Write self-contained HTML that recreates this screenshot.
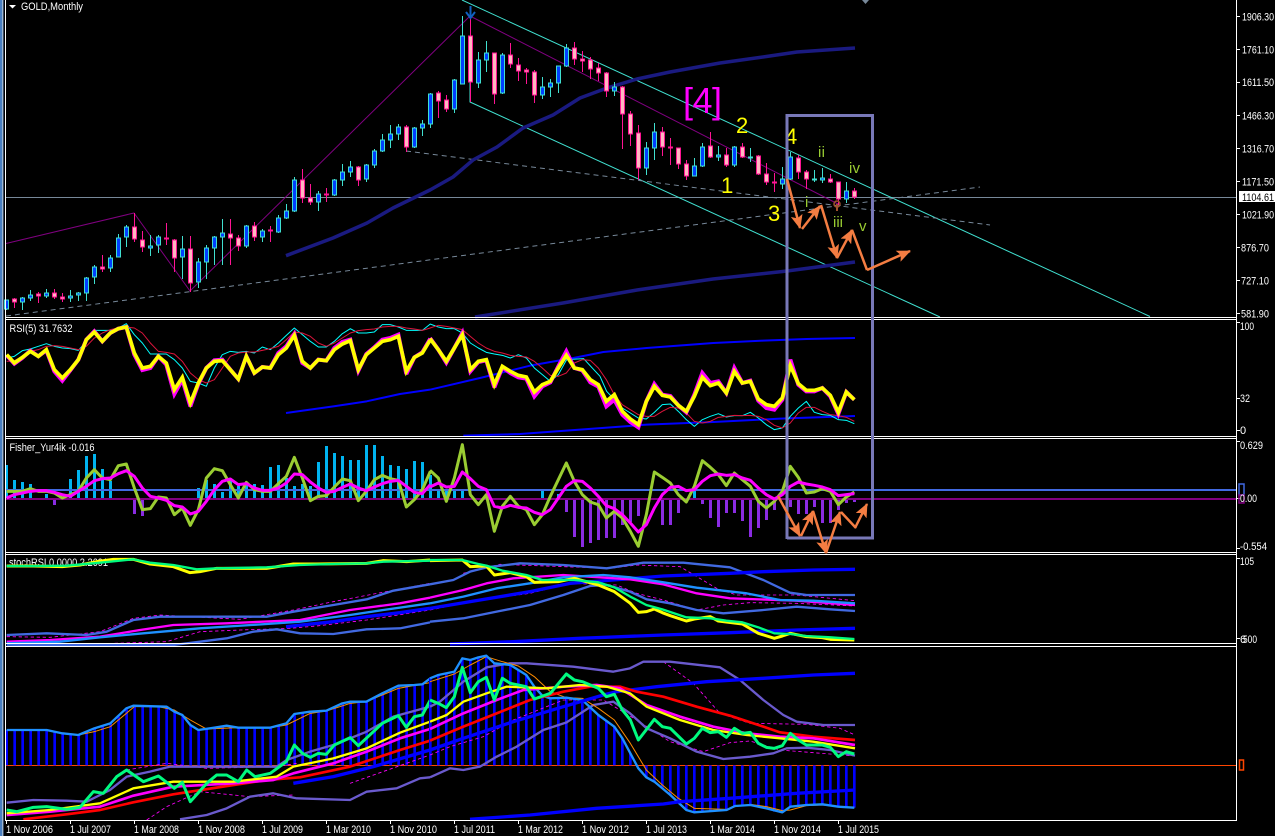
<!DOCTYPE html>
<html><head><meta charset="utf-8"><title>GOLD,Monthly</title>
<style>
html,body{margin:0;padding:0;background:#000;width:1275px;height:836px;overflow:hidden}
svg{display:block}
text{font-family:"Liberation Sans",sans-serif;font-size:11px;fill:#fff}
.l{fill:none;stroke-linejoin:round}
</style></head><body>
<svg width="1275" height="836" viewBox="0 0 1275 836" xmlns="http://www.w3.org/2000/svg">
<defs>
<marker id="a" markerUnits="userSpaceOnUse" markerWidth="14" markerHeight="12" refX="13" refY="6" orient="auto"><path d="M0 0L14 6L0 12L3 6z" fill="#f47d42"/></marker>
</defs>
<rect width="1275" height="836" fill="#000"/>
<rect x="0" y="0" width="2" height="836" fill="#4a7fc0"/>
<rect x="2" y="0" width="1" height="836" fill="#9ab4d0"/>
<rect x="3" y="0" width="1" height="836" fill="#3a4a60"/>

<!-- MAIN CHART -->
<path d="M5 197.5H1236" stroke="#778899" stroke-width="1" shape-rendering="crispEdges"/>
<path class="l" d="M6 243.5L134 213L190 291L470 16L838 204" stroke="#800080" stroke-width="1"/>
<path class="l" d="M462 0L1150 316.5M470 82V102L940 317" stroke="#40e0d0" stroke-width="1"/>
<path class="l" d="M6 316L980 187M406 151L990 225" stroke="#778899" stroke-width="1" stroke-dasharray="5 4"/>
<path class="l" d="M286 255.7L333 238L367 223L393 208L430 190L453 177L473 160L497 147L523 128L553 115L580 98L607 88L637 79L670 72L720 63L763 57L797 52L855 48" stroke="#1a1a80" stroke-width="3.500"/>
<path class="l" d="M475 317L563 303L637 290L713 279L787 271L855 262" stroke="#1a1a80" stroke-width="3.500"/>

<g shape-rendering="crispEdges">
<path fill="none" stroke="#40e0d0" d="M6.5 300V310M22.5 297V310M30.5 290V301M46.5 289V298M70.5 290V302M78.5 292V301M86.5 277V301M94.5 265V284M110.5 255V272M118.5 234V257M126.5 225V247M150.5 235V256M158.5 235V253M182.5 236V279M198.5 258V288M206.5 245V279M214.5 236V265M222.5 219V265M246.5 225V248M262.5 229V242M278.5 215V233M286.5 204V219M294.5 177V212M318.5 191V211M334.5 179V196M342.5 164V186M350.5 161V177M366.5 164V182M374.5 149V168M382.5 134V152M390.5 125V148M398.5 124V140M414.5 127V148M422.5 120V136M430.5 93V128M454.5 79V113M462.5 16V84M478.5 52V88M486.5 41V72M502.5 53V94M542.5 77V99M550.5 79V97M558.5 66V93M566.5 44V67M614.5 82V96M646.5 142V175M654.5 123V160M694.5 158V176M702.5 143V167M718.5 146V161M734.5 146V167M750.5 148V162M782.5 167V189M790.5 152V180M814.5 170V182M822.5 168V183M846.5 182V203"/>
<path fill="#0040ff" stroke="#40e0d0" d="M4.5 300h4V309h-4zM20.5 298h4V302h-4zM28.5 295h4V298h-4zM44.5 293h4V296h-4zM68.5 296h4V298h-4zM76.5 293h4V295h-4zM84.5 278h4V293h-4zM92.5 267h4V277h-4zM108.5 258h4V268h-4zM116.5 238h4V257h-4zM124.5 227h4V237h-4zM148.5 246h4V248h-4zM156.5 237h4V245h-4zM180.5 249h4V257h-4zM196.5 262h4V282h-4zM204.5 248h4V262h-4zM212.5 237h4V248h-4zM220.5 233h4V237h-4zM244.5 226h4V246h-4zM260.5 231h4V237h-4zM276.5 218h4V232h-4zM284.5 211h4V218h-4zM292.5 180h4V211h-4zM316.5 194h4V202h-4zM332.5 180h4V195h-4zM340.5 172h4V180h-4zM348.5 167h4V172h-4zM364.5 165h4V179h-4zM372.5 151h4V165h-4zM380.5 140h4V151h-4zM388.5 134h4V140h-4zM396.5 127h4V134h-4zM412.5 128h4V147h-4zM420.5 124h4V128h-4zM428.5 94h4V124h-4zM452.5 80h4V109h-4zM460.5 36h4V84h-4zM476.5 60h4V83h-4zM484.5 53h4V60h-4zM500.5 55h4V93h-4zM540.5 87h4V95h-4zM548.5 83h4V87h-4zM556.5 66h4V83h-4zM564.5 48h4V66h-4zM612.5 87h4V91h-4zM644.5 148h4V168h-4zM652.5 132h4V148h-4zM692.5 166h4V176h-4zM700.5 147h4V166h-4zM716.5 155h4V157h-4zM732.5 147h4V165h-4zM748.5 157h4V158h-4zM780.5 179h4V184h-4zM788.5 157h4V179h-4zM812.5 179h4V180h-4zM820.5 178h4V180h-4zM844.5 191h4V199h-4z"/>
<path fill="none" stroke="#ff1493" d="M14.5 298V308M38.5 292V303M54.5 289V299M62.5 293V302M102.5 255V272M134.5 213V242M142.5 231V252M166.5 223V245M174.5 239V272M190.5 236V292M230.5 219V265M238.5 235V251M254.5 222V241M270.5 226V242M302.5 169V203M310.5 184V205M326.5 188V202M358.5 166V186M406.5 125V152M438.5 91V118M446.5 95V112M470.5 10V102M494.5 53V104M510.5 43V68M518.5 58V81M526.5 68V84M534.5 70V103M574.5 42V65M582.5 51V72M590.5 57V79M598.5 63V81M606.5 72V97M622.5 86V149M630.5 111V146M638.5 125V180M662.5 127V156M670.5 138V165M678.5 148V169M686.5 160V180M710.5 132V158M726.5 148V167M742.5 143V158M758.5 155V175M766.5 163V185M774.5 173V192M798.5 155V179M806.5 170V189M830.5 174V183M838.5 182V205M854.5 188V199"/>
<path fill="#ffb6c1" stroke="#ff1493" d="M12.5 299h4V302h-4zM36.5 294h4V296h-4zM52.5 293h4V297h-4zM60.5 297h4V299h-4zM100.5 267h4V269h-4zM132.5 227h4V239h-4zM140.5 240h4V247h-4zM164.5 238h4V239h-4zM172.5 240h4V258h-4zM188.5 249h4V283h-4zM228.5 234h4V238h-4zM236.5 238h4V246h-4zM252.5 226h4V237h-4zM268.5 230h4V231h-4zM300.5 180h4V198h-4zM308.5 198h4V202h-4zM324.5 194h4V195h-4zM356.5 167h4V180h-4zM404.5 127h4V147h-4zM436.5 93h4V101h-4zM444.5 100h4V109h-4zM468.5 36h4V82h-4zM492.5 53h4V94h-4zM508.5 55h4V64h-4zM516.5 65h4V71h-4zM524.5 70h4V72h-4zM532.5 72h4V95h-4zM572.5 48h4V59h-4zM580.5 59h4V61h-4zM588.5 60h4V69h-4zM596.5 68h4V73h-4zM604.5 73h4V91h-4zM620.5 87h4V114h-4zM628.5 114h4V134h-4zM636.5 133h4V168h-4zM660.5 132h4V147h-4zM668.5 147h4V148h-4zM676.5 148h4V164h-4zM684.5 164h4V176h-4zM708.5 146h4V157h-4zM724.5 155h4V165h-4zM740.5 147h4V157h-4zM756.5 156h4V174h-4zM764.5 174h4V182h-4zM772.5 182h4V183h-4zM796.5 158h4V172h-4zM804.5 172h4V179h-4zM828.5 179h4V182h-4zM836.5 182h4V199h-4zM852.5 191h4V197h-4z"/>
</g>

<path d="M470.5 6V18M466 12L470.5 18L475 12" fill="none" stroke="#1060c0" stroke-width="2"/>
<path d="M862 0H869L865.5 4z" fill="#778899"/>
<circle cx="837" cy="204" r="3" fill="none" stroke="#a0522d" stroke-width="1.5"/><path d="M837 204V211" stroke="#a0522d" stroke-width="2"/>

<text x="683" y="113" style="font-size:36px;fill:#ff00ff" textLength="39">[4]</text>
<text x="736" y="133" style="font-size:22px;fill:#ff0">2</text>
<text x="785" y="144" style="font-size:22px;fill:#ff0">4</text>
<text x="721" y="193" style="font-size:22px;fill:#ff0">1</text>
<text x="768" y="221" style="font-size:22px;fill:#ff0">3</text>
<text x="818" y="157" style="font-size:15px;fill:#9acd32" textLength="7">ii</text>
<text x="849" y="173" style="font-size:15px;fill:#9acd32" textLength="11">iv</text>
<text x="805" y="207" style="font-size:15px;fill:#9acd32">i</text>
<text x="833" y="227" style="font-size:15px;fill:#9acd32" textLength="10">iii</text>
<text x="859" y="231" style="font-size:15px;fill:#9acd32">v</text>

<path d="M9 5H16L12.5 8.5z" fill="#fff"/>
<text x="21" y="10" textLength="62" lengthAdjust="spacingAndGlyphs">GOLD,Monthly</text>

<!-- RSI -->
<g transform="translate(0 318) scale(.33333)" class="l">
<polyline class="l" stroke="#0000ff" stroke-width="6" points="858,285 1000,265 1100,250 1200,228 1290,215"/>
<polyline class="l" stroke="#00ffff" stroke-width="3" points="20,120 43,115 67,98 91,93 115,85 139,77 163,85 187,90 211,92 235,97 259,70 283,37 307,37 331,37 355,30 379,17 403,50 427,75 451,108 475,108 499,108 523,125 547,150 571,190 595,195 619,205 643,150 667,110 691,100 715,103 739,100 763,105 787,87 811,95 835,75 859,52 883,30 907,50 931,70 955,87 979,87 1003,70 1027,47 1051,32 1075,45 1099,45 1123,42 1147,20 1171,20 1195,27 1219,37 1243,37 1267,37 1291,18"/>
<polyline class="l" stroke="#dc143c" stroke-width="3" points="20,130 43,128 67,115 91,100 115,95 139,85 163,83 187,85 211,90 235,95 259,85 283,60 307,45 331,35 355,30 379,27 403,30 427,45 451,75 475,100 499,103 523,108 547,130 571,165 595,185 619,195 643,185 667,150 691,115 715,105 739,102 763,102 787,97 811,92 835,85 859,65 883,42 907,45 931,55 955,75 979,85 1003,75 1027,60 1051,45 1075,38 1099,35 1123,33 1147,27 1171,25 1195,25 1219,30 1243,33 1267,37 1291,30"/>
<polyline class="l" stroke="#ff00ff" stroke-width="12" style="stroke-linejoin:miter;stroke-miterlimit:3" points="20,112 43,137 67,120 91,98 115,115 139,97 163,160 187,188 211,157 235,125 259,65 283,40 307,70 331,45 355,32 379,27 403,110 427,156 451,150 475,115 499,140 523,228 547,185 571,265 595,198 619,150 643,127 667,125 691,155 715,183 739,115 763,165 787,147 811,150 835,105 859,85 883,48 907,135 931,150 955,125 979,128 1003,90 1027,72 1051,65 1075,158 1099,108 1123,88 1147,65 1171,60 1195,50 1219,168 1243,118 1267,103 1291,62"/>
<polyline class="l" stroke="#ffff00" stroke-width="11" style="stroke-linejoin:miter" points="20,110 43,135 67,118 91,100 115,115 139,95 163,155 187,180 211,155 235,125 259,65 283,42 307,70 331,45 355,32 379,27 403,105 427,150 451,145 475,115 499,135 523,215 547,178 571,255 595,195 619,150 643,130 667,128 691,155 715,183 739,115 763,165 787,147 811,150 835,110 859,90 883,52 907,130 931,150 955,125 979,128 1003,95 1027,78 1051,68 1075,155 1099,110 1123,90 1147,70 1171,65 1195,55 1219,160 1243,118 1267,105 1291,65"/>
</g>
<g transform="translate(430 318) scale(.33333)" class="l">
<polyline class="l" stroke="#0000ff" stroke-width="6" points="0,215 150,180 300,143 430,120 520,102 650,90 850,75 1000,68 1130,63 1275,60"/>
<polyline class="l" stroke="#0000ff" stroke-width="6" points="100,353 270,348 450,335 650,320 850,312 1050,302 1275,294"/>
<polyline class="l" stroke="#00ffff" stroke-width="3" points="0,18 25,27 49,32 73,32 97,45 121,75 145,90 169,103 193,108 217,112 241,120 265,110 289,120 313,150 337,170 361,190 385,170 410,125 461,122 510,175 530,220 577,270 625,300 649,303 673,283 697,260 721,258 745,280 769,305 793,325 817,305 841,295 865,287 889,297 913,293 937,293 961,283 985,300 1009,320 1033,335 1057,330 1081,295 1105,270 1129,250 1153,283 1177,290 1201,292 1225,305 1249,307 1273,317"/>
<polyline class="l" stroke="#dc143c" stroke-width="3" points="0,30 25,22 49,25 73,30 97,35 121,55 145,75 169,90 193,100 217,105 241,112 265,115 289,117 313,130 337,150 361,172 385,175 409,165 433,135 457,125 481,127 505,150 529,185 553,230 577,260 601,275 625,290 649,295 673,295 697,280 721,268 745,270 769,285 793,310 817,315 841,310 865,298 889,295 913,292 937,293 961,292 985,295 1009,305 1033,322 1057,330 1081,315 1105,285 1129,268 1153,268 1177,280 1201,290 1225,293 1249,298 1273,310"/>
<polyline class="l" stroke="#ff00ff" stroke-width="12" style="stroke-linejoin:miter;stroke-miterlimit:3" points="0,60 25,95 49,134 73,90 97,45 121,160 145,132 169,127 193,208 217,148 241,165 265,178 289,182 313,235 337,205 361,193 385,145 409,100 433,150 457,157 481,193 505,206 529,265 553,245 577,290 601,312 625,328 649,250 673,198 697,230 721,234 745,262 769,283 793,230 817,165 841,195 865,190 889,225 913,150 937,195 961,188 985,248 1009,270 1033,275 1057,245 1081,125 1105,200 1129,220 1153,220 1177,210 1201,235 1225,288 1249,222 1273,245"/>
<polyline class="l" stroke="#ffff00" stroke-width="11" style="stroke-linejoin:miter" points="0,62 25,95 49,130 73,90 97,50 121,155 145,130 169,125 193,200 217,145 241,160 265,172 289,177 313,222 337,200 361,190 385,150 409,112 433,150 457,155 481,185 505,200 529,250 553,230 577,280 601,303 625,320 649,250 673,205 697,232 721,237 745,262 769,280 793,235 817,178 841,203 865,195 889,225 913,160 937,195 961,190 985,243 1009,260 1033,265 1057,240 1081,142 1105,197 1129,217 1153,217 1177,210 1201,232 1225,283 1249,222 1273,245"/>
</g>
<text x="9.5" y="332" textLength="63" lengthAdjust="spacingAndGlyphs">RSI(5) 31.7632</text>

<!-- FISHER -->
<g shape-rendering="crispEdges" fill="none" stroke-width="3">
<path stroke="#00b4f0" d="M6.5 465V499M14.5 480V499M22.5 482V499M30.5 484V499M46.5 494V499M70.5 479V499M78.5 470V499M86.5 456V499M94.5 454V499M102.5 469V499M110.5 481V499M198.5 488V499M206.5 480V499M214.5 484V499M222.5 492V499M230.5 480V499M238.5 486V499M246.5 484V499M254.5 484V499M262.5 485V499M270.5 467V499M278.5 465V499M286.5 478V499M294.5 486V499M302.5 484V499M310.5 486V499M318.5 462V499M326.5 446V499M334.5 453V499M342.5 456V499M350.5 460V499M358.5 460V499M366.5 445V499M374.5 445V499M382.5 456V499M390.5 465V499M398.5 466V499M406.5 469V499M414.5 461V499M422.5 462V499M430.5 475V499M438.5 491V499M446.5 491V499M454.5 491V499M462.5 491V499M542.5 491V499M558.5 494V499M694.5 491V499"/>
<path stroke="#8a2be2" d="M54.5 499V505M134.5 499V514M142.5 499V516M566.5 499V512M574.5 499V537M582.5 499V547M590.5 499V543M598.5 499V540M606.5 499V538M614.5 499V538M622.5 499V525M630.5 499V522M638.5 499V516M662.5 499V525M670.5 499V525M678.5 499V513M702.5 499V504M710.5 499V518M718.5 499V527M726.5 499V513M734.5 499V513M742.5 499V521M750.5 499V537M758.5 499V528M766.5 499V520M774.5 499V510M790.5 499V507M798.5 499V514M806.5 499V514M814.5 499V507M822.5 499V523M830.5 499V523M838.5 499V510M846.5 499V503M854.5 499V502"/>
</g>
<path d="M6 490H1236" stroke="#4169e1" stroke-width="2" shape-rendering="crispEdges"/>
<path d="M6 499H1236" stroke="#800080" stroke-width="2" shape-rendering="crispEdges"/>
<g transform="translate(0 318) scale(.33333)">
<polyline class="l" stroke="#9acd32" stroke-width="9" points="20,520 43,520 67,520 91,512 115,520 139,520 163,525 187,540 211,530 235,520 259,480 283,455 307,480 331,485 355,443 379,438 403,510 427,575 451,572 475,537 499,540 523,590 547,570 571,622 595,575 619,480 643,452 667,458 691,500 715,540 739,493 763,515 787,520 811,520 835,497 859,475 883,418 907,480 931,548 955,535 979,533 1003,507 1027,483 1051,488 1075,548 1099,520 1123,485 1147,472 1171,482 1195,487 1219,567 1243,545 1267,515 1291,460"/>
<polyline class="l" stroke="#ff00ff" stroke-width="9" points="20,540 43,530 67,525 91,520 115,518 139,518 163,523 187,530 211,535 235,520 259,505 283,488 307,482 331,480 355,467 379,458 403,475 427,510 451,535 475,540 499,547 523,563 547,567 571,588 595,580 619,550 643,515 667,490 691,483 715,500 739,497 763,510 787,517 811,517 835,510 859,495 883,468 907,470 931,492 955,510 979,523 1003,520 1027,508 1051,498 1075,510 1099,518 1123,507 1147,497 1171,490 1195,487 1219,505 1243,523 1267,527 1291,500"/>
</g>
<g transform="translate(430 318) scale(.33333)">
<polyline class="l" stroke="#9acd32" stroke-width="9" points="0,457 25,480 49,550 73,480 97,380 121,530 145,560 169,530 193,640 217,565 241,535 265,565 289,575 313,620 337,590 361,535 385,485 409,435 433,490 457,530 481,552 505,560 529,600 553,580 577,600 601,640 625,685 649,590 673,462 697,478 721,495 745,530 769,552 793,505 817,428 841,448 865,470 889,503 913,465 937,485 961,505 985,550 1009,570 1033,550 1057,520 1081,445 1105,478 1129,525 1153,522 1177,512 1201,520 1225,560 1249,537 1273,522"/>
<polyline class="l" stroke="#ff00ff" stroke-width="9" points="0,507 25,495 49,507 73,505 97,462 121,482 145,505 169,515 193,565 217,570 241,562 265,568 289,570 313,583 337,590 361,575 385,540 409,505 433,488 457,490 481,510 505,535 529,563 553,572 577,590 601,615 625,642 649,620 673,570 697,530 721,508 745,505 769,518 793,515 817,490 841,473 865,468 889,472 913,470 937,480 961,487 985,510 1009,530 1033,543 1057,530 1081,505 1105,492 1129,498 1153,502 1177,507 1201,515 1225,533 1249,530 1273,527"/>
</g>
<text x="9.5" y="451" textLength="85" lengthAdjust="spacingAndGlyphs">Fisher_Yur4ik -0.016</text>

<!-- STOCH RSI -->
<text x="9" y="566" textLength="99" lengthAdjust="spacingAndGlyphs">stochRSI 0.0000 2.2691</text>
<g transform="translate(0 550) scale(.33333)">
<polyline class="l" stroke="#ff00ff" stroke-width="2.5" stroke-dasharray="10 8" points="20,260 150,262 300,245 400,205 480,195 720,208 880,180 1000,155 1290,100"/>
<polyline class="l" stroke="#ff00ff" stroke-width="2.5" stroke-dasharray="10 8" points="20,290 500,275 600,245 720,240 870,235 950,228 1100,210 1290,180"/>
<polyline class="l" stroke="#4169e1" stroke-width="7" points="20,255 140,250 260,255 320,245 400,210 480,200 800,200 880,185 1000,165 1100,148 1180,122 1290,103"/>
<polyline class="l" stroke="#4169e1" stroke-width="7" points="20,284 100,285 520,285 600,275 680,265 760,245 830,238 900,250 1000,252 1100,238 1200,235 1290,217"/>
<polyline class="l" stroke="#0000ff" stroke-width="10" points="858,230 1000,215 1100,200 1200,188 1290,175"/>
<polyline class="l" stroke="#ff00ff" stroke-width="7" points="20,275 150,270 300,260 420,240 520,225 680,220 900,210 1050,180 1200,160 1290,143"/>
<polyline class="l" stroke="#1e90ff" stroke-width="7" points="20,280 180,275 300,262 430,250 600,235 800,222 900,215 1050,195 1150,180 1290,160"/>
<polyline class="l" stroke="#ffff00" stroke-width="9" points="20,48 100,48 187,50 240,45 290,35 340,28 400,28 450,42 520,50 570,68 600,65 650,55 700,55 800,55 880,42 950,42 1100,40 1150,32 1220,35 1290,30"/>
<polyline class="l" stroke="#00fa7f" stroke-width="7" points="20,48 100,48 200,47 300,38 400,28 450,38 520,45 590,58 650,55 800,52 900,45 1000,42 1100,40 1150,35 1290,32"/>
</g>
<g transform="translate(430 550) scale(.33333)">
<polyline class="l" stroke="#ff00ff" stroke-width="2.5" stroke-dasharray="10 8" points="100,70 210,43 400,50 540,55 620,45 750,50 860,115 920,135 1100,135 1275,152"/>
<polyline class="l" stroke="#ff00ff" stroke-width="2.5" stroke-dasharray="10 8" points="0,180 150,150 300,130 420,100 560,105 620,130 700,150 800,180 880,165 960,158 1100,160 1275,168"/>
<polyline class="l" stroke="#4169e1" stroke-width="7" points="0,103 70,90 120,65 170,52 270,40 400,45 530,55 640,38 760,38 900,52 1000,90 1080,128 1130,135 1275,135"/>
<polyline class="l" stroke="#4169e1" stroke-width="7" points="0,215 100,205 200,185 300,165 400,135 480,108 530,105 600,125 650,148 720,160 800,180 880,190 1000,180 1100,170 1200,178 1275,183"/>
<polyline class="l" stroke="#0000ff" stroke-width="10" points="0,175 150,150 300,125 420,100 550,90 700,78 900,70 1000,65 1150,60 1275,58"/>
<polyline class="l" stroke="#0000ff" stroke-width="10" points="60,282 250,275 450,265 700,255 900,248 1100,240 1275,235"/>
<polyline class="l" stroke="#ff00ff" stroke-width="7" points="0,143 100,120 170,100 250,85 400,75 600,88 700,103 800,130 900,145 1100,152 1275,165"/>
<polyline class="l" stroke="#1e90ff" stroke-width="7" points="0,160 100,140 200,115 300,100 400,82 520,75 600,82 700,97 800,113 950,130 1050,150 1150,152 1275,160"/>
<polyline class="l" stroke="#ffff00" stroke-width="9" points="0,32 97,30 121,50 169,48 193,75 241,68 289,80 313,97 385,95 433,85 505,105 553,125 601,160 625,187 649,185 673,177 697,188 721,197 769,213 793,207 841,200 865,213 937,222 985,250 1033,265 1057,258 1081,250 1129,260 1177,263 1201,268 1273,270"/>
<polyline class="l" stroke="#00fa7f" stroke-width="7" points="0,30 97,30 145,42 169,47 217,62 289,75 337,90 433,90 505,97 553,112 601,140 649,165 697,178 769,202 841,205 889,212 937,217 985,232 1033,250 1081,252 1129,258 1201,262 1273,267"/>
</g>

<!-- MACD PANEL -->
<path d="M6 765.5H1236" stroke="#ff4500" stroke-width="1" shape-rendering="crispEdges"/>
<g transform="translate(0 550) scale(.33333)">
<path fill="none" stroke="#0000ff" stroke-width="8" d="M20 646V540M44 646V540M68 646V540M92 646V540M116 646V540M140 646V540M164 646V545M188 646V550M212 646V553M236 646V555M260 646V545M284 646V535M308 646V530M332 646V520M356 646V500M380 646V475M404 646V467M428 646V470M452 646V470M476 646V470M500 646V470M524 646V485M548 646V495M572 646V525M596 646V540M620 646V537M644 646V533M668 646V528M692 646V530M716 646V533M740 646V533M764 646V533M788 646V533M812 646V533M836 646V527M860 646V520M884 646V492M908 646V488M932 646V485M956 646V484M980 646V482M1004 646V470M1028 646V460M1052 646V455M1076 646V455M1100 646V455M1124 646V440M1148 646V430M1172 646V418M1196 646V407M1220 646V407M1244 646V405M1268 646V403"/>
<polyline class="l" stroke="#ff00ff" stroke-width="2.5" stroke-dasharray="10 8" points="440,810 500,770 600,725 750,740 880,735"/>
<polyline class="l" stroke="#ff00ff" stroke-width="2.5" stroke-dasharray="10 8" points="380,660 500,640 620,655 830,650 890,640"/>
<polyline class="l" stroke="#ff00ff" stroke-width="2.5" stroke-dasharray="10 8" points="1050,700 1290,615"/>
<polyline class="l" stroke="#6a5acd" stroke-width="7" points="20,758 100,750 200,752 260,755 330,720 380,680 450,665 510,650 700,650 830,650 860,630 930,605 1000,585 1100,545 1180,500 1290,470"/>
<polyline class="l" stroke="#6a5acd" stroke-width="7" points="540,808 620,795 680,775 750,740 820,730 890,745 1050,750 1100,725 1190,715 1260,685 1290,682"/>
<polyline class="l" stroke="#ff8c00" stroke-width="3" points="140,540 187,550 235,555 283,545 331,530 379,490 403,470 475,470 523,480 571,510 619,537 715,533 811,533 859,525 931,490 979,483 1051,460 1099,455 1195,415 1290,398"/>
<polyline class="l" stroke="#1e90ff" stroke-width="7" points="20,540 140,540 187,550 235,555 283,535 331,520 379,475 400,467 500,470 523,485 547,495 571,525 595,540 643,533 680,527 715,533 811,533 859,520 883,492 930,485 979,482 1027,460 1051,455 1099,455 1147,430 1195,407 1243,405 1267,403 1291,385"/>
<polyline class="l" stroke="#0000ff" stroke-width="10" points="880,700 1000,680 1120,650 1290,600"/>
<polyline class="l" stroke="#ff0000" stroke-width="8" points="70,808 200,793 300,780 400,757 520,733 700,705 800,690 900,682 1050,650 1200,600 1290,572"/>
<polyline class="l" stroke="#ff00ff" stroke-width="8" points="20,795 150,785 300,770 400,737 520,710 700,700 820,690 880,670 1000,640 1100,605 1200,565 1290,537"/>
<polyline class="l" stroke="#ffff00" stroke-width="7" points="20,790 150,780 300,760 400,715 520,695 700,695 830,680 880,650 1000,625 1100,595 1200,548 1290,515"/>
<polyline class="l" stroke="#00fa7f" stroke-width="9" points="20,780 50,785 100,772 140,770 200,778 240,772 280,725 310,730 350,680 380,660 430,695 475,678 523,715 547,697 571,755 620,700 650,675 680,675 715,695 740,660 765,680 811,670 859,635 883,585 907,610 931,622 955,610 979,613 1003,585 1051,563 1075,587 1147,520 1195,497 1219,532 1243,500 1267,495 1291,450"/>
</g>
<g transform="translate(430 550) scale(.33333)">
<path fill="none" stroke="#0000ff" stroke-width="8" d="M1 646V385M25 646V375M49 646V370M73 646V365M97 646V325M121 646V330M145 646V322M169 646V317M193 646V340M217 646V343M241 646V345M265 646V360M289 646V375M313 646V410M337 646V437M361 646V445M385 646V445M409 646V443M433 646V447M457 646V450M481 646V472M505 646V495M529 646V512M553 646V530M577 646V565M601 646V610M649 646V682M673 646V695M697 646V715M721 646V735M745 646V757M769 646V780M793 646V787M817 646V783M841 646V783M865 646V780M889 646V780M913 646V768M937 646V766M961 646V765M985 646V770M1009 646V775M1033 646V785M1057 646V787M1081 646V770M1105 646V767M1129 646V765M1153 646V764M1177 646V763M1201 646V765M1225 646V770M1249 646V772M1273 646V773"/>
<polyline class="l" stroke="#ff00ff" stroke-width="2.5" stroke-dasharray="10 8" points="700,335 790,400 870,490 960,520 1130,523 1230,535 1275,555"/>
<polyline class="l" stroke="#ff00ff" stroke-width="2.5" stroke-dasharray="10 8" points="0,615 60,590 160,560 250,510 400,450 520,450 620,510 720,575 820,605 900,578 960,573 1050,600 1275,618"/>
<polyline class="l" stroke="#6a5acd" stroke-width="7" points="0,470 30,455 100,395 170,352 240,340 290,340 430,350 550,365 600,355 640,335 720,335 870,352 930,390 1000,450 1060,495 1100,515 1180,525 1275,525"/>
<polyline class="l" stroke="#6a5acd" stroke-width="7" points="0,682 60,655 100,660 150,650 200,620 260,590 340,540 410,517 490,465 550,455 600,490 650,535 720,565 800,605 880,627 960,620 1030,610 1070,595 1130,593 1200,600 1275,617"/>
<polyline class="l" stroke="#ff8c00" stroke-width="3" points="0,395 73,372 121,345 169,320 217,335 265,348 313,380 361,425 409,443 457,445 505,475 553,510 601,580 649,660 697,705 745,745 793,775 890,778 915,770 961,763 1009,770 1057,782 1081,780 1129,767 1177,765 1225,770 1273,773"/>
<polyline class="l" stroke="#1e90ff" stroke-width="7" points="0,385 25,375 73,365 97,325 121,330 145,322 169,317 193,340 241,345 289,375 313,410 337,437 361,445 409,443 457,450 505,495 553,530 577,565 601,610 625,655 649,682 673,695 721,735 769,780 793,787 890,780 915,768 961,765 1009,775 1057,787 1081,770 1129,765 1177,763 1225,770 1273,773"/>
<polyline class="l" stroke="#0000ff" stroke-width="10" points="0,600 100,565 250,515 400,470 520,435 560,425 680,410 830,395 1000,385 1150,375 1275,370"/>
<polyline class="l" stroke="#0000ff" stroke-width="10" points="120,808 300,795 500,775 700,762 750,755 900,745 1100,730 1275,720"/>
<polyline class="l" stroke="#ff0000" stroke-width="8" points="0,572 100,530 200,490 300,450 400,425 480,410 570,410 620,425 700,440 800,470 900,497 1000,530 1050,547 1150,560 1275,570"/>
<polyline class="l" stroke="#ff00ff" stroke-width="8" points="0,537 100,490 200,450 280,420 400,410 500,405 570,415 650,465 750,500 850,530 950,550 1050,560 1150,565 1275,585"/>
<polyline class="l" stroke="#ffff00" stroke-width="7" points="0,515 50,495 100,455 170,430 230,410 350,415 450,405 530,410 600,430 650,470 750,510 850,540 950,555 1050,565 1150,575 1275,595"/>
<polyline class="l" stroke="#00fa7f" stroke-width="9" points="0,450 25,460 49,473 73,440 97,352 121,428 145,395 169,382 193,450 217,385 241,400 289,410 313,447 361,430 409,372 433,390 457,395 505,415 529,440 553,433 577,480 601,510 625,570 673,508 697,530 721,535 769,582 793,565 817,535 841,548 865,545 889,562 913,535 937,550 961,547 985,580 1009,592 1033,595 1057,587 1081,550 1105,570 1129,585 1177,585 1201,592 1225,620 1249,605 1273,612"/>
</g>

<!-- PANEL FRAMES -->
<g fill="none" stroke="#fff" stroke-width="1" shape-rendering="crispEdges">
<path d="M5.5 0V820.5M1236.5 0V820.5"/>
<path d="M5 317.5H1237M5 319.5H1237M5 436.5H1237M5 438.5H1237M5 552.5H1237M5 554.5H1237M5 643.5H1237M5 646.5H1237M5 820.5H1237"/>
<path d="M6.5 821V824M70.5 821V824M134.5 821V824M198.5 821V824M262.5 821V824M326.5 821V824M390.5 821V824M454.5 821V824M518.5 821V824M582.5 821V824M646.5 821V824M710.5 821V824M774.5 821V824M838.5 821V824"/>
<path d="M1237 16.5h3M1237 49.5h3M1237 82.5h3M1237 115.5h3M1237 148.5h3M1237 181.5h3M1237 214.5h3M1237 247.5h3M1237 280.5h3M1237 313.5h3M1237 322.5h3M1237 398.5h3M1237 430.5h3M1237 441.5h3M1237 498.5h3M1237 548.5h3M1237 558.5h3M1237 638.5h3"/>
</g>

<!-- BOX + ARROWS -->
<path d="M787 539V115.500H872.500V538H787" fill="none" stroke="#7878b8" stroke-width="3"/>
<g fill="none" stroke="#f47d42" stroke-width="2.500">
<path d="M787 179L800 228" marker-end="url(#a)"/>
<path d="M802 229L820 206" marker-end="url(#a)"/>
<path d="M821 205L837 258" marker-end="url(#a)"/>
<path d="M837 258L852 230" marker-end="url(#a)"/>
<path d="M852 230L867 270"/>
<path d="M867 270L910 251" marker-end="url(#a)"/>
<path d="M778 496L800 536" marker-end="url(#a)"/>
<path d="M801 536L813 511" marker-end="url(#a)"/>
<path d="M813 511L826 553" marker-end="url(#a)"/>
<path d="M826 553L840 512" marker-end="url(#a)"/>
<path d="M841 512L856 528"/>
<path d="M855 528L867 504" marker-end="url(#a)"/>
</g>

<!-- PRICE AXIS -->
<text x="1242" y="20.500" textLength="32" lengthAdjust="spacingAndGlyphs">1906.30</text>
<text x="1242" y="53.500" textLength="32" lengthAdjust="spacingAndGlyphs">1761.10</text>
<text x="1242" y="86" textLength="32" lengthAdjust="spacingAndGlyphs">1611.50</text>
<text x="1242" y="119.500" textLength="32" lengthAdjust="spacingAndGlyphs">1466.30</text>
<text x="1242" y="152.500" textLength="32" lengthAdjust="spacingAndGlyphs">1316.70</text>
<text x="1242" y="185.500" textLength="32" lengthAdjust="spacingAndGlyphs">1171.50</text>
<rect x="1239" y="191" width="36" height="11" fill="#fff"/>
<text x="1242" y="201" textLength="32" lengthAdjust="spacingAndGlyphs" style="fill:#000">1104.61</text>
<text x="1242" y="218.500" textLength="32" lengthAdjust="spacingAndGlyphs">1021.90</text>
<text x="1241" y="251.500" textLength="28" lengthAdjust="spacingAndGlyphs">876.70</text>
<text x="1241" y="284.500" textLength="28" lengthAdjust="spacingAndGlyphs">727.10</text>
<text x="1241" y="317.500" textLength="28" lengthAdjust="spacingAndGlyphs">581.90</text>
<text x="1240" y="330" textLength="14" lengthAdjust="spacingAndGlyphs">100</text>
<text x="1240" y="402" textLength="10" lengthAdjust="spacingAndGlyphs">32</text>
<text x="1240" y="434">0</text>
<text x="1240" y="449" textLength="23" lengthAdjust="spacingAndGlyphs">0.629</text>
<rect x="1239" y="484" width="5" height="11" fill="#000" stroke="#4169e1" stroke-width="1.500"/>
<rect x="1239" y="495" width="5" height="8" fill="none" stroke="#800080" stroke-width="1.500"/>
<text x="1240" y="502" textLength="17" lengthAdjust="spacingAndGlyphs">0.00</text>
<text x="1240" y="550" textLength="27" lengthAdjust="spacingAndGlyphs">-0.554</text>
<text x="1240" y="565" textLength="14" lengthAdjust="spacingAndGlyphs">105</text>
<text x="1240" y="643">6</text>
<text x="1243" y="643" textLength="14" lengthAdjust="spacingAndGlyphs">500</text>
<rect x="1239.500" y="760" width="4" height="10" fill="#000" stroke="#ff4500" stroke-width="1.500"/>

<!-- TIME AXIS -->
<text x="6" y="833" textLength="47" lengthAdjust="spacingAndGlyphs">1 Nov 2006</text>
<text x="70" y="833" textLength="41" lengthAdjust="spacingAndGlyphs">1 Jul 2007</text>
<text x="134" y="833" textLength="45" lengthAdjust="spacingAndGlyphs">1 Mar 2008</text>
<text x="198" y="833" textLength="47" lengthAdjust="spacingAndGlyphs">1 Nov 2008</text>
<text x="262" y="833" textLength="41" lengthAdjust="spacingAndGlyphs">1 Jul 2009</text>
<text x="326" y="833" textLength="45" lengthAdjust="spacingAndGlyphs">1 Mar 2010</text>
<text x="390" y="833" textLength="47" lengthAdjust="spacingAndGlyphs">1 Nov 2010</text>
<text x="454" y="833" textLength="41" lengthAdjust="spacingAndGlyphs">1 Jul 2011</text>
<text x="518" y="833" textLength="45" lengthAdjust="spacingAndGlyphs">1 Mar 2012</text>
<text x="582" y="833" textLength="47" lengthAdjust="spacingAndGlyphs">1 Nov 2012</text>
<text x="646" y="833" textLength="41" lengthAdjust="spacingAndGlyphs">1 Jul 2013</text>
<text x="710" y="833" textLength="45" lengthAdjust="spacingAndGlyphs">1 Mar 2014</text>
<text x="774" y="833" textLength="47" lengthAdjust="spacingAndGlyphs">1 Nov 2014</text>
<text x="838" y="833" textLength="41" lengthAdjust="spacingAndGlyphs">1 Jul 2015</text>
</svg>
</body></html>
